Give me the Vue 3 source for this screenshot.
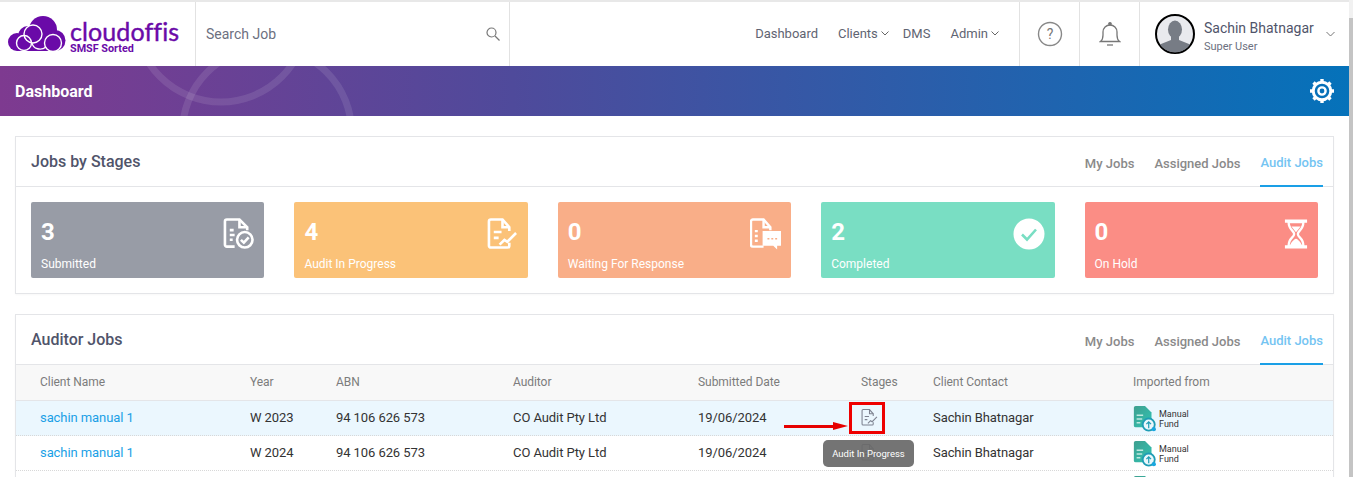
<script setup>
const stats = [
  { count: 3, label: 'Submitted', color: '#989ca6', icon: 'submitted' },
  { count: 4, label: 'Audit In Progress', color: '#fbc278', icon: 'progress' },
  { count: 0, label: 'Waiting For Response', color: '#f9ae88', icon: 'waiting' },
  { count: 2, label: 'Completed', color: '#79dec3', icon: 'completed' },
  { count: 0, label: 'On Hold', color: '#fb8d85', icon: 'hold' },
]

const navItems = [
  { label: 'Dashboard' },
  { label: 'Clients', menu: true },
  { label: 'DMS' },
  { label: 'Admin', menu: true },
]

const tabs = ['My Jobs', 'Assigned Jobs', 'Audit Jobs']
const columns = ['Client Name', 'Year', 'ABN', 'Auditor', 'Submitted Date', 'Stages', 'Client Contact', 'Imported from']

const jobs = [
  { name: 'sachin manual 1', year: 'W 2023', abn: '94 106 626 573', auditor: 'CO Audit Pty Ltd', date: '19/06/2024', contact: 'Sachin Bhatnagar', source: true, active: true },
  { name: 'sachin manual 1', year: 'W 2024', abn: '94 106 626 573', auditor: 'CO Audit Pty Ltd', date: '19/06/2024', contact: 'Sachin Bhatnagar', source: true },
  { name: '', year: '', abn: '', auditor: '', date: '', contact: '', source: false },
]
</script>

<template>
  <div class="page">
    <header class="topbar">
      <div class="logo">
        <svg class="logo-mark" width="58" height="36" viewBox="0 0 58 36">
          <g fill="#6a0aa8">
            <circle cx="35" cy="14" r="14" />
            <circle cx="9" cy="26" r="9" />
            <circle cx="20" cy="20" r="10" />
            <circle cx="47" cy="24.500" r="10.500" />
            <rect x="9" y="20" width="38" height="15" />
          </g>
          <g fill="none" stroke="#fff" stroke-width="1.400">
            <circle cx="16" cy="27" r="7.500" />
            <circle cx="25" cy="18" r="9" />
            <circle cx="45" cy="27" r="8.500" />
            <path d="M24 27c1 6 9 8 14 4" />
          </g>
        </svg>
        <div class="logo-text">
          <div class="logo-name">cloudoffis</div>
          <div class="logo-sub">SMSF Sorted</div>
        </div>
      </div>
      <div class="search">
        <span>Search Job</span>
        <svg width="14" height="14" viewBox="0 0 14 14" fill="none" stroke="#777" stroke-width="1.200">
          <circle cx="5.500" cy="5.500" r="4.500" />
          <path d="M9 9l4.500 4.500" />
        </svg>
      </div>
      <nav class="nav">
        <a v-for="item in navItems" :key="item.label" class="nav-item" :class="{ 'has-menu': item.menu }">
          {{ item.label }}
          <svg v-if="item.menu" width="8" height="5" viewBox="0 0 8 5" fill="none" stroke="#666" stroke-width="1">
            <path d="M.5.500L4 4 7.500.500" />
          </svg>
        </a>
      </nav>
      <div class="icon-cell">
        <svg width="26" height="26" viewBox="0 0 26 26" fill="none">
          <circle cx="13" cy="13" r="11.500" stroke="#888" stroke-width="1.400" />
          <text x="13" y="18" text-anchor="middle" class="help-mark">?</text>
        </svg>
      </div>
      <div class="icon-cell">
        <svg width="22" height="26" viewBox="0 0 22 26" fill="none" stroke="#777" stroke-width="1.300">
          <path d="M1.500 20.500c2-1.500 2.500-3 2.500-6.500v-3a7 7 0 0 1 14 0v3c0 3.500.5 5 2.500 6.500z" />
          <circle cx="11" cy="2.800" r="1.200" fill="#777" />
          <path d="M8 24h6" />
        </svg>
      </div>
      <div class="profile">
        <svg class="avatar" width="40" height="40" viewBox="0 0 40 40">
          <defs>
            <clipPath id="avatar-clip"><circle cx="20" cy="20" r="18.500" /></clipPath>
          </defs>
          <circle cx="20" cy="20" r="19" fill="#e9eaee" stroke="#000" stroke-width="2" />
          <g clip-path="url(#avatar-clip)" fill="#777c85">
            <ellipse cx="20" cy="15.500" rx="7" ry="9" />
            <path d="M16 22h8v4l10 4c2 1 3 5 3 10H3c0-5 1-9 3-10l10-4z" />
          </g>
        </svg>
        <div class="profile-text">
          <div class="profile-name">Sachin Bhatnagar</div>
          <div class="profile-role">Super User</div>
        </div>
        <svg class="profile-caret" width="9" height="6" viewBox="0 0 9 6" fill="none" stroke="#777" stroke-width="1">
          <path d="M.5 1l4 4 4-4" />
        </svg>
      </div>
    </header>

    <div class="banner">
      <svg class="banner-rings" width="300" height="50" viewBox="0 0 300 50" fill="none" stroke="#fff" stroke-opacity=".1" stroke-width="7">
        <circle cx="146" cy="-50" r="86" />
        <circle cx="192" cy="66" r="84.500" />
      </svg>
      <h1>Dashboard</h1>
      <svg class="gear" width="26" height="26" viewBox="0 0 26 26" fill="none" stroke="#fff">
        <circle cx="13" cy="13" r="8.800" stroke-width="3" />
        <circle cx="13" cy="13" r="3.600" stroke-width="2.400" />
        <path d="M13 1v3M13 22v3M1 13h3M22 13h3M4.500 4.500l2.200 2.200M19.300 19.300l2.200 2.200M4.500 21.500l2.200-2.200M19.300 6.700l2.200-2.200" stroke-width="3.400" />
      </svg>
    </div>

    <main class="content">
      <section class="card">
        <div class="card-head">
          <h2>Jobs by Stages</h2>
          <div class="tabs">
            <a v-for="tab in tabs" :key="tab" class="tab" :class="{ active: tab === 'Audit Jobs' }">{{ tab }}</a>
          </div>
        </div>
        <div class="stats">
          <div v-for="stat in stats" :key="stat.label" class="stat" :style="{ background: stat.color }">
            <div>
              <div class="stat-count">{{ stat.count }}</div>
              <div class="stat-label">{{ stat.label }}</div>
            </div>
            <svg v-if="stat.icon === 'submitted'" class="stat-icon" width="31" height="32" viewBox="0 0 32 32" fill="none" stroke="#fff" stroke-width="2.700">
              <path d="M12 29H4a2 2 0 0 1-2-2V3a2 2 0 0 1 2-2h13l8 8v3" />
              <path d="M17 1v8h8" />
              <path d="M7 12h4M7 17h5M7 22h3" />
              <circle cx="22.500" cy="22" r="8" />
              <path d="M18.500 22l3 3 5-5.500" />
            </svg>
            <svg v-else-if="stat.icon === 'progress'" class="stat-icon" width="31" height="32" viewBox="0 0 32 32" fill="none" stroke="#fff" stroke-width="2.700">
              <path d="M23 25v3a2 2 0 0 1-2 2H4a2 2 0 0 1-2-2V3a2 2 0 0 1 2-2h12l7 8v4" />
              <path d="M16 1v8h7" />
              <path d="M7 14h8M7 20h5" />
              <path d="M13 27l5-5 3 2 9-9" />
            </svg>
            <svg v-else-if="stat.icon === 'waiting'" class="stat-icon" width="31" height="32" viewBox="0 0 32 32" fill="none" stroke="#fff" stroke-width="2.500">
              <path d="M14 29H3a2 2 0 0 1-2-2V3a2 2 0 0 1 2-2h11l7 8v3" />
              <path d="M14 1v8h7" />
              <path d="M5 13h3M5 18h3M5 23h3" />
              <path d="M13 13h19v15h-4v4l-4-4h-11z" fill="#fff" stroke="none" />
              <path d="M18 21h2M22 21h2M26 21h2" stroke="#f9ae88" stroke-width="1.500" />
            </svg>
            <svg v-else-if="stat.icon === 'completed'" class="stat-icon" width="32" height="32" viewBox="0 0 32 32">
              <circle cx="16" cy="16" r="15.500" fill="#fff" />
              <path d="M9 16.500l5 5 9-10" fill="none" stroke="#79dec3" stroke-width="2.600" />
            </svg>
            <svg v-else class="stat-icon" width="24" height="32" viewBox="0 0 26 32" fill="none" stroke="#fff">
              <path d="M1 2h24M1 30h24" stroke-width="3.500" />
              <path d="M5 3c0 9 6 9 6 13s-6 4-6 13h16c0-9-6-9-6-13s6-4 6-13z" stroke-width="2.500" />
              <path d="M8 8h10l-5 6zM6.500 29c1-5 6.500-8 6.500-8s5.500 3 6.500 8z" fill="#fff" stroke="none" />
            </svg>
          </div>
        </div>
      </section>

      <section class="card jobs">
        <div class="card-head">
          <h2>Auditor Jobs</h2>
          <div class="tabs">
            <a v-for="tab in tabs" :key="tab" class="tab" :class="{ active: tab === 'Audit Jobs' }">{{ tab }}</a>
          </div>
        </div>
        <div class="table-row table-head">
          <div v-for="col in columns" :key="col">{{ col }}</div>
        </div>
        <div v-for="(job, i) in jobs" :key="i" class="table-row" :class="{ active: job.active }">
          <div class="client">{{ job.name }}</div>
          <div>{{ job.year }}</div>
          <div>{{ job.abn }}</div>
          <div>{{ job.auditor }}</div>
          <div>{{ job.date }}</div>
          <div class="stage-cell">
            <svg width="17" height="17" viewBox="0 0 32 32" fill="none" stroke="#7d8290" stroke-width="2">
              <path d="M23 25v3a2 2 0 0 1-2 2H4a2 2 0 0 1-2-2V3a2 2 0 0 1 2-2h12l7 8v4" />
              <path d="M16 1v8h7" />
              <path d="M7 14h8M7 20h5" />
              <path d="M13 27l5-5 3 2 9-9" />
            </svg>
          </div>
          <div>{{ job.contact }}</div>
          <div class="imported">
            <svg width="24" height="26" viewBox="0 0 24 28">
              <defs>
                <linearGradient id="file-fill" x1="0" y1="0" x2="1" y2="1">
                  <stop offset="0" stop-color="#3f9f8f" />
                  <stop offset="1" stop-color="#2fc4b4" />
                </linearGradient>
              </defs>
              <path d="M2 0h10l7 7v16H2a2 2 0 0 1-2-2V2a2 2 0 0 1 2-2z" fill="url(#file-fill)" />
              <path d="M3 10h7M3 14h6M3 18h4" stroke="#bfe9e0" stroke-width="1.500" />
              <circle cx="16" cy="20" r="6.500" fill="#eaf7fb" stroke="#1f9db5" stroke-width="2" />
              <path d="M16 24v-7M13.500 19.500l2.500-2.500 2.500 2.500" fill="none" stroke="#1f9db5" stroke-width="1.300" />
              <circle cx="21.500" cy="25" r="2.300" fill="#19a7e0" />
            </svg>
            <span v-if="job.source">Manual<br />Fund</span>
          </div>
        </div>

        <!-- review marker over the first row -->
        <div class="marker">
          <div class="marker-line"></div>
          <div class="marker-head"></div>
        </div>
        <div class="marker-box"></div>
        <div class="tooltip">Audit In Progress</div>
      </section>
    </main>

    <div class="scrollbar"></div>
  </div>
</template>

<style>
html, body {
  margin: 0;
  background: #fff;
  overflow: hidden;
}
</style>

<style scoped>
.page {
  position: relative;
  width: 1353px;
  height: 477px;
  overflow: hidden;
  padding-right: 4px;
  box-sizing: border-box;
  background: #fff;
  font-family: Roboto, "Liberation Sans", sans-serif;
  font-size: 13px;
  color: #333;
}

.topbar {
  display: flex;
  height: 66px;
  box-sizing: border-box;
  border-top: 2px solid #e8e8e8;
}

.logo {
  display: flex;
  width: 196px;
  flex: none;
  box-sizing: border-box;
  padding: 14px 0 0 8px;
  gap: 4px;
  border-right: 1px solid #e2e2e2;
}

.logo-text {
  padding-top: 3px;
  color: #6a0aa8;
}

.logo-name {
  font-family: Lato, sans-serif;
  font-size: 25px;
  font-weight: 400;
  line-height: 24px;
  letter-spacing: .1px;
  -webkit-text-stroke: .4px #6a0aa8;
}

.logo-sub {
  font-size: 10.800px;
  font-weight: 700;
  line-height: 11px;
}

.search {
  display: flex;
  align-items: center;
  justify-content: space-between;
  width: 314px;
  flex: none;
  box-sizing: border-box;
  padding: 0 9px 0 10px;
  border-right: 1px solid #e2e2e2;
  font-size: 14px;
  color: #6c7080;
}

.nav {
  display: flex;
  flex: 1;
  justify-content: flex-end;
  align-items: center;
  padding: 0 20px 2px 0;
  gap: 20px;
}

.nav-item {
  display: flex;
  align-items: center;
  gap: 3px;
  color: #5f6472;
  font-size: 13px;
}

.nav-item.has-menu:nth-child(2) {
  margin-right: -6px;
}

.icon-cell {
  display: flex;
  align-items: center;
  justify-content: center;
  width: 60px;
  flex: none;
  box-sizing: border-box;
  border-left: 1px solid #e2e2e2;
}

.help-mark {
  font-family: Roboto, sans-serif;
  font-size: 14px;
  fill: #777;
}

.profile {
  display: flex;
  align-items: center;
  width: 210px;
  flex: none;
  box-sizing: border-box;
  border-left: 1px solid #e2e2e2;
  padding-left: 15px;
}

.avatar {
  flex: none;
  margin-right: 9px;
}

.profile-text {
  flex: 1;
  padding-top: 5px;
}

.profile-name {
  font-size: 14px;
  line-height: 18px;
  color: #50546a;
}

.profile-role {
  margin-top: 1px;
  font-size: 11px;
  line-height: 17px;
  color: #6c7080;
}

.profile-caret {
  margin-right: 14px;
}

.banner {
  position: relative;
  display: flex;
  align-items: center;
  justify-content: space-between;
  height: 50px;
  padding: 0 14px 0 15px;
  overflow: hidden;
  background: linear-gradient(90deg, #7e3a90 0%, #4f4a9b 38%, #0572ba 100%);
}

.banner-rings {
  position: absolute;
  left: 75px;
  top: 0;
}

.banner h1 {
  position: relative;
  margin: 0;
  color: #fff;
  font-size: 16px;
  font-weight: 700;
}

.gear {
  position: relative;
}

.content {
  padding: 20px 15px 0;
}

.card {
  position: relative;
  border: 1px solid #e4e5e8;
  background: #fff;
  box-shadow: 0 1px 2px rgba(0, 0, 0, .03);
}

.jobs {
  margin-top: 20px;
}

.card-head {
  display: flex;
  align-items: stretch;
  justify-content: space-between;
  height: 50px;
  box-sizing: border-box;
  padding: 0 10px 0 15px;
  border-bottom: 1px solid #e4e5e8;
}

.card-head h2 {
  margin: 0;
  align-self: center;
  font-size: 16px;
  font-weight: 500;
  color: #50546a;
}

.tabs {
  display: flex;
  gap: 20px;
}

.tab {
  display: flex;
  align-items: center;
  height: 50px;
  box-sizing: border-box;
  padding-top: 3px;
  color: #8a8a8a;
  font-size: 13px;
  font-weight: 500;
}

.tab.active {
  color: #75c4f2;
  border-bottom: 2px solid #1a9fe6;
  margin-bottom: -1px;
}

.stats {
  display: grid;
  grid-template-columns: repeat(5, 1fr);
  gap: 30px;
  padding: 15px;
}

.stat {
  display: flex;
  justify-content: space-between;
  height: 76px;
  box-sizing: border-box;
  padding: 15px 10px 0;
  border-radius: 2px;
  color: #fff;
}

.stat-count {
  font-size: 24px;
  font-weight: 700;
  line-height: 30px;
}

.stat-label {
  margin-top: 10px;
  font-size: 12px;
  line-height: 14px;
  white-space: nowrap;
}

.stat-icon {
  margin-top: 1px;
}

.table-row {
  display: grid;
  grid-template-columns: 210px 86px 177px 185px 163px 72px 200px 1fr;
  align-items: center;
  height: 35px;
  box-sizing: border-box;
  padding: 0 0 2px 24px;
  border-bottom: 1px dotted #d8d8d8;
  color: #333;
  font-size: 13px;
  letter-spacing: -.08px;
}

.table-head {
  height: 36px;
  background: #f8f8f8;
  border-bottom: 1px solid #e4e5e8;
  color: #7c7c7c;
  font-size: 12px;
  letter-spacing: -.05px;
}

.table-row.active {
  background: #ebf7fe;
}

.client {
  color: #1a9fe6;
}

.stage-cell {
  display: flex;
  padding-top: 1px;
}

.imported {
  display: flex;
  align-items: center;
  gap: 2px;
  padding-top: 3px;
  font-size: 9px;
  line-height: 10px;
  letter-spacing: 0;
  color: #333;
}

.marker {
  position: absolute;
  left: 768px;
  top: 107px;
  display: flex;
  align-items: center;
}

.marker-line {
  width: 49px;
  height: 3px;
  background: #e60000;
}

.marker-head {
  width: 0;
  height: 0;
  border-left: 15px solid #e60000;
  border-top: 4px solid transparent;
  border-bottom: 4px solid transparent;
}

.marker-box {
  position: absolute;
  left: 833px;
  top: 87px;
  width: 36px;
  height: 32px;
  box-sizing: border-box;
  border: 3px solid #ee0000;
}

.tooltip {
  position: absolute;
  left: 807px;
  top: 125px;
  width: 91px;
  height: 27px;
  border-radius: 5px;
  background: rgba(105, 105, 105, .93);
  color: #fff;
  font-size: 9.500px;
  line-height: 27px;
  text-align: center;
}

.scrollbar {
  position: absolute;
  right: 0;
  top: 0;
  bottom: 0;
  width: 4px;
  background: linear-gradient(#f1f1f1 18px, #c4c4c4 18px);
}
</style>
